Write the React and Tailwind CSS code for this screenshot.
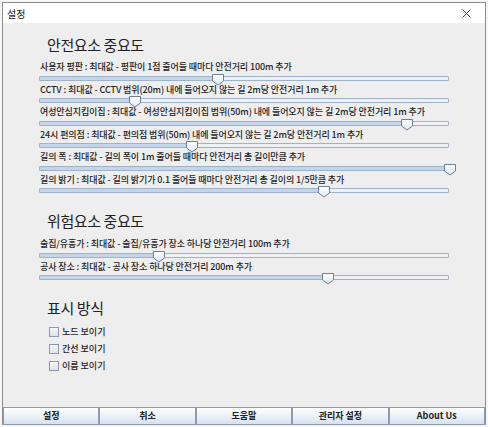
import React from "react";

const ko = { fontFamily: '"Noto Sans CJK KR", "Noto Sans", sans-serif' };

const safety = [
  { label: "사용자 평판 : 최대값 - 평판이 1점 줄어들 때마다 안전거리 100m 추가", pos: 216 },
  { label: "CCTV : 최대값 - CCTV 범위(20m) 내에 들어오지 않는 길 2m당 안전거리 1m 추가", pos: 133 },
  { label: "여성안심지킴이집 : 최대값 - 여성안심지킴이집 범위(50m) 내에 들어오지 않는 길 2m당 안전거리 1m 추가", pos: 405 },
  { label: "24시 편의점 : 최대값 - 편의점 범위(50m) 내에 들어오지 않는 길 2m당 안전거리 1m 추가", pos: 190 },
  { label: "길의 폭 : 최대값 - 길의 폭이 1m 줄어들 때마다 안전거리 총 길이만큼 추가", pos: 448 },
  { label: "길의 밝기 : 최대값 - 길의 밝기가 0.1 줄어들 때마다 안전거리 총 길이의 1/5만큼 추가", pos: 322 },
];

const danger = [
  { label: "술집/유흥가 : 최대값 - 술집/유흥가 장소 하나당 안전거리 100m 추가", pos: 157 },
  { label: "공사 장소 : 최대값 - 공사 장소 하나당 안전거리 200m 추가", pos: 326 },
];

const options = ["노드 보이기", "간선 보이기", "이름 보이기"];
const buttons = ["설정", "취소", "도움말", "관리자 설정", "About Us"];

// track runs from x=38 to x=448 on the page
const TRACK_LEFT = 38;

function Slider({ label, pos }) {
  const offset = pos - TRACK_LEFT;
  return (
    <div>
      <div className="h-[11.5px] flex items-center pl-[37px] text-[9px] leading-none text-[#1e1e1e] font-medium whitespace-nowrap tracking-[-0.1px]">
        {label}
      </div>
      <div className="h-[11px] pl-[36px] flex items-center">
        <div className="relative w-[410px] h-[5px] border border-[#9fb2c9] bg-[#eef2f7] rounded-[1px]">
          <div
            className="absolute left-0 top-0 h-full bg-[#c4d5ea]"
            style={{ width: offset }}
          />
          <svg
            className="absolute top-[-4px]"
            style={{ left: offset - 7 }}
            width="14"
            height="13"
            viewBox="0 0 14 13"
          >
            <defs>
              <linearGradient id="thumb" x1="0" y1="0" x2="0" y2="1">
                <stop offset="0" stopColor="#ffffff" />
                <stop offset="1" stopColor="#dfe7f1" />
              </linearGradient>
            </defs>
            <path
              d="M1.5 1.5 H12.5 V8 L7 12 L1.5 8 Z"
              fill="url(#thumb)"
              stroke="#6f7f94"
              strokeWidth="1"
            />
          </svg>
        </div>
      </div>
    </div>
  );
}

export default function App() {
  return (
    <div className="w-[488px] h-[427px] bg-[#f6f6f6] overflow-hidden pt-[2px] pl-[2px]" style={ko}>
      <div className="w-[484px] h-[423px] flex flex-col border-x border-t border-[#8c8c8c] bg-[#eeeeee]">
        {/* 제목 표시줄 */}
        <div className="h-[20px] bg-white flex items-center justify-between pl-[4px] pr-[14px]">
          <span className="text-[10px] text-[#222]">설정</span>
          <svg width="9" height="9" viewBox="0 0 9 9">
            <path d="M0.5 0.5 L8.5 8.5 M8.5 0.5 L0.5 8.5" stroke="#444" strokeWidth="1" />
          </svg>
        </div>

        {/* 내용 */}
        <div className="flex-1 relative">
          <h2 className="mt-[12px] h-[20px] leading-[20px] pl-[44px] text-[15px] text-[#222] tracking-[-0.4px]">
            안전요소 중요도
          </h2>
          <div className="mt-[6px]">
            {safety.map((s, i) => (
              <Slider key={i} {...s} />
            ))}
          </div>

          <h2 className="mt-[15px] h-[20px] leading-[20px] pl-[44px] text-[15px] text-[#222] tracking-[-0.4px]">
            위험요소 중요도
          </h2>
          <div className="mt-[7px]">
            {danger.map((s, i) => (
              <Slider key={i} {...s} />
            ))}
          </div>

          <h2 className="mt-[15px] h-[20px] leading-[20px] pl-[44px] text-[15px] text-[#222] tracking-[-0.4px]">
            표시 방식
          </h2>
          <div className="mt-[5px] pl-[46px]">
            {options.map((o) => (
              <div key={o} className="h-[17px] flex items-center gap-[3px]">
                <div className="w-[10px] h-[10px] border border-[#8e9aab] bg-gradient-to-b from-[#f4f6f9] to-[#dde3ea]" />
                <span className="text-[9px] leading-none text-[#1e1e1e] font-medium">{o}</span>
              </div>
            ))}
          </div>
        </div>

        {/* 하단 버튼 */}
        <div className="h-[18px] grid grid-cols-5">
          {buttons.map((b) => (
            <button
              key={b}
              className="h-full border border-[#8d9bb0] bg-gradient-to-b from-[#ffffff] to-[#d6e2ef] text-[9px] font-semibold text-[#222] flex items-center justify-center"
            >
              {b}
            </button>
          ))}
        </div>
      </div>
    </div>
  );
}
